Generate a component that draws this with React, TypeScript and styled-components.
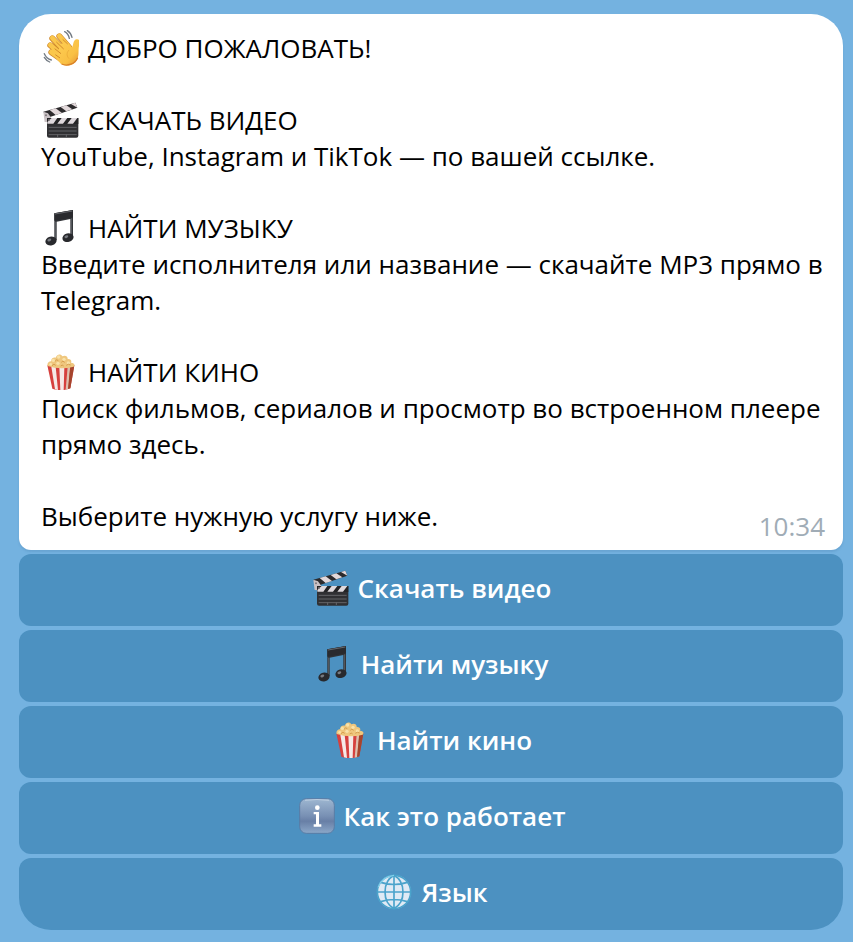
import React from "react";
import styled, { createGlobalStyle, css } from "styled-components";

const GlobalStyle = createGlobalStyle`
  * { box-sizing: border-box; }
  body {
    margin: 0;
    background: #74b2e0;
    font-family: "Open Sans", "Noto Sans", sans-serif;
    font-size: 26px;
    line-height: 36px;
    color: #000;
  }
`;

const Chat = styled.main`
  display: flex;
  flex-direction: column;
  gap: 4px;
  padding: 14px 10px 12px 19px;
`;

const Bubble = styled.article`
  display: flex;
  flex-direction: column;
  gap: 36px;
  padding: 16px 18px 16px 22px;
  background: #fff;
  border-radius: 32px 32px 12px 12px;
  box-shadow: 0 2px 2px rgba(70, 125, 170, 0.25);
`;

const Section = styled.section``;

const Heading = styled.h2`
  display: flex;
  align-items: center;
  gap: 9px;
  margin: 0;
  font-size: inherit;
  font-weight: 400;
`;

const Paragraph = styled.p`
  margin: 0;
`;

const Footer = styled.footer`
  display: flex;
  justify-content: space-between;
  align-items: flex-start;
  height: 36px;
`;

const Time = styled.time`
  padding-top: 10px;
  color: #a0acb6;
`;

const Keyboard = styled.nav`
  display: flex;
  flex-direction: column;
  gap: 4px;
`;

const KeyButton = styled.button<{ $last?: boolean }>`
  display: flex;
  align-items: center;
  justify-content: center;
  gap: 9px;
  width: 100%;
  height: 72px;
  padding: 0 16px 4px;
  border: 0;
  border-radius: 12px;
  background: #4c91c1;
  color: #fff;
  font: inherit;
  font-weight: 600;
  cursor: pointer;
  ${(p) =>
    p.$last &&
    css`
      border-radius: 12px 12px 32px 32px;
    `}
`;

const Icon = styled.svg`
  flex: none;
  width: 36px;
  height: 36px;
  margin-left: 2px;
`;

const Wave = () => (
  <Icon viewBox="0 0 108 108" aria-hidden="true">
    <defs>
      <linearGradient id="skin" x1="0" y1="0" x2="1" y2="1">
        <stop offset="0" stopColor="#ffcf55" />
        <stop offset="0.65" stopColor="#f9c044" />
        <stop offset="1" stopColor="#e39032" />
      </linearGradient>
    </defs>
    <g fill="none" strokeLinecap="round">
      <g stroke="#d08a2e" strokeWidth="18">
        <path d="M49 19 78 52M28 25 66 64M22 46 58 77M25 67 58 90" />
      </g>
      <g stroke="#fac74c" strokeWidth="14">
        <path d="M49 18 78 52M28 24 66 64M22 45 58 77M25 66 58 90" />
      </g>
    </g>
    <path
      d="M52 42 74 37C79 44 83 50 87 52 92 46 89 31 100 28 111 25 111 37 108 48 105 62 109 74 103 87 95 108 69 111 54 102L40 86Z"
      fill="url(#skin)"
    />
    <path d="M40 36 62 57M35 56 54 71M37 74 51 84M59 28 74 42" fill="none" stroke="#d48b2b" strokeWidth="3" />
    <path d="M104 83C96 102 73 110 56 102" fill="none" stroke="#d98229" strokeWidth="4" />
    <path d="M78 60C69 70 72 80 78 86" fill="none" stroke="#e7a535" strokeWidth="2" />
    <path d="M65 5Q76 11 79 25M73 2Q84 9 87 22M4 71Q10 85 25 90M4 82Q9 91 20 96" fill="none" stroke="#737b84" strokeWidth="4" strokeLinecap="round" />
  </Icon>
);

const Clapper = () => (
  <Icon viewBox="0 0 108 108" aria-hidden="true">
    <path d="M1 29 97 2 103 17 12 48Z" fill="#2c2a2c" />
    <path d="M20 24 38 19 57 33 38 39ZM53 15 70 10 88 22 70 28ZM84 6 97 2 103 17Z" fill="#e2d8da" />
    <path d="M1 29 15 34 25 48 22 61 5 60Z" fill="#c9c1c4" />
    <path d="M12 48H106V101Q106 107 100 107H18Q12 107 12 101Z" fill="#303033" />
    <path d="M12 48H106V66H12Z" fill="#242426" />
    <path d="M26 48H43L31 65H13V60ZM56 48H73L60 65H43ZM86 48H103L90 65H73Z" fill="#ded8dc" />
    <path d="M17 76H101M17 87H101M17 98H101M44 98V105M70 98V105" fill="none" stroke="#7d7e82" strokeWidth="2" />
    <circle cx="9" cy="40" r="3" fill="#7c767b" />
    <circle cx="18" cy="54" r="3" fill="#7c767b" />
  </Icon>
);

const Notes = () => (
  <Icon viewBox="0 0 108 108" aria-hidden="true">
    <path d="M34 10 90 0V80H82V27L41 35V90H34Z" fill="#303236" />
    <path d="M34 10 90 0V22L34 32Z" fill="#292a2e" />
    <path d="M36 12 88 3" stroke="#65676c" strokeWidth="3" />
    <path d="M38 35V89M86 25V79" stroke="#707278" strokeWidth="2" />
    <g fill="#28292d">
      <ellipse cx="24" cy="93" rx="17" ry="13" transform="rotate(-15 24 93)" />
      <ellipse cx="75" cy="83" rx="17" ry="13" transform="rotate(-15 75 83)" />
    </g>
    <g fill="#777a80">
      <ellipse cx="19" cy="90" rx="6" ry="4" transform="rotate(-20 19 90)" />
      <ellipse cx="70" cy="80" rx="6" ry="4" transform="rotate(-20 70 80)" />
    </g>
  </Icon>
);

const Popcorn = () => (
  <Icon viewBox="0 0 108 108" aria-hidden="true">
    <path d="M13 34H94L82 103Q54 114 28 104Z" fill="#d6403e" />
    <path d="M25 38H38L45 108 36 106ZM49 40H64L62 108H52Z" fill="#f5e9e7" />
    <path d="M74 38H82L76 105 68 107Z" fill="#ddbfae" />
    <path d="M82 34H94L82 103 75 105Z" fill="#a5452d" />
    <path d="M14 36C11 28 18 21 25 22 23 12 33 9 38 11 43-1 54 0 58 7 67 2 75 8 74 15 83 14 87 21 84 26 94 26 97 33 92 38Q52 48 14 36Z" fill="#efc77e" />
    <g fill="#f9e2a8">
      <circle cx="47" cy="9" r="5" />
      <circle cx="31" cy="19" r="5" />
      <circle cx="63" cy="16" r="5" />
      <circle cx="45" cy="28" r="5" />
      <circle cx="23" cy="31" r="4" />
      <circle cx="76" cy="27" r="5" />
    </g>
    <path d="M36 22Q41 14 46 20M55 25Q59 18 65 25M27 35Q33 27 38 34M70 34Q75 28 83 33M53 36Q58 31 62 36" fill="none" stroke="#d59c4c" strokeWidth="3" />
  </Icon>
);

const Info = () => (
  <Icon viewBox="0 0 108 108" aria-hidden="true">
    <defs>
      <linearGradient id="tile" x1="0" y1="0" x2="0" y2="1">
        <stop offset="0" stopColor="#9eb7d1" />
        <stop offset="0.5" stopColor="#7890b4" />
        <stop offset="0.65" stopColor="#687fa6" />
        <stop offset="1" stopColor="#8ca8c9" />
      </linearGradient>
    </defs>
    <rect x="2" y="2" width="104" height="104" rx="20" fill="url(#tile)" stroke="#587ca5" strokeWidth="3" />
    <path d="M18 7Q54 2 90 7" fill="none" stroke="#bdcee0" strokeWidth="3" />
    <circle cx="55" cy="29" r="7" fill="#fff" />
    <path d="M44 42H60V79H67V86H44V79H51V49H44Z" fill="#fff" />
  </Icon>
);

const Globe = () => (
  <Icon viewBox="0 0 108 108" aria-hidden="true">
    <circle cx="54" cy="54" r="51" fill="#dfeaf5" />
    <g fill="none" stroke="#4ba3cb" strokeWidth="5">
      <circle cx="54" cy="54" r="50" />
      <path d="M54 4V104M4 54H104M14 25Q54 38 94 25M14 83Q54 70 94 83M54 4C18 24 18 84 54 104M54 4C90 24 90 84 54 104" />
    </g>
    <path d="M7 39Q18 7 54 4" fill="none" stroke="#83cfea" strokeWidth="4" />
  </Icon>
);

export default function App() {
  return (
    <>
      <GlobalStyle />
      <Chat>
        <Bubble>
          <Heading><Wave />ДОБРО ПОЖАЛОВАТЬ!</Heading>
          <Section>
            <Heading><Clapper />СКАЧАТЬ ВИДЕО</Heading>
            <Paragraph>YouTube, Instagram и TikTok — по вашей ссылке.</Paragraph>
          </Section>
          <Section>
            <Heading><Notes />НАЙТИ МУЗЫКУ</Heading>
            <Paragraph>Введите исполнителя или название — скачайте MP3 прямо в Telegram.</Paragraph>
          </Section>
          <Section>
            <Heading><Popcorn />НАЙТИ КИНО</Heading>
            <Paragraph>Поиск фильмов, сериалов и просмотр во встроенном плеере прямо здесь.</Paragraph>
          </Section>
          <Footer>
            <Paragraph>Выберите нужную услугу ниже.</Paragraph>
            <Time>10:34</Time>
          </Footer>
        </Bubble>
        <Keyboard>
          <KeyButton type="button"><Clapper />Скачать видео</KeyButton>
          <KeyButton type="button"><Notes />Найти музыку</KeyButton>
          <KeyButton type="button"><Popcorn />Найти кино</KeyButton>
          <KeyButton type="button"><Info />Как это работает</KeyButton>
          <KeyButton type="button" $last><Globe />Язык</KeyButton>
        </Keyboard>
      </Chat>
    </>
  );
}
